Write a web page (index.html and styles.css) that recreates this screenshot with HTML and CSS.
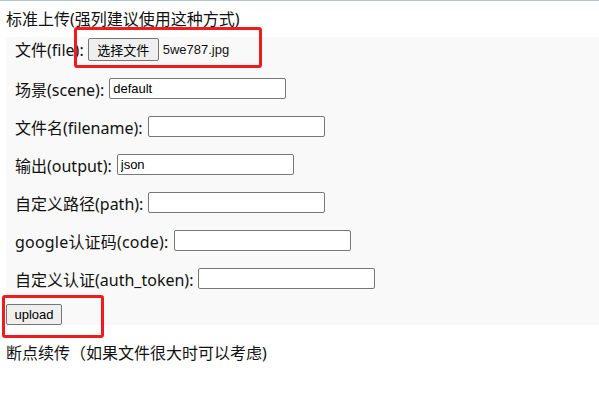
FILE: index.html
```html
<!DOCTYPE html>
<html lang="zh-CN">
<head>
<meta charset="utf-8">
<title>upload</title>
<link rel="stylesheet" href="styles.css">
</head>
<body>
<div class="page">
  <div class="title">标准上传(强列建议使用这种方式)</div>
  <form class="panel">
    <div class="row row-file">
      <span class="label">文件(file):</span>
      <button type="button" class="btn btn-file">选择文件</button>
      <span class="filename">5we787.jpg</span>
    </div>
    <div class="row">
      <span class="label">场景(scene):</span>
      <input class="field" type="text" value="default">
    </div>
    <div class="row">
      <span class="label">文件名(filename):</span>
      <input class="field" type="text">
    </div>
    <div class="row">
      <span class="label">输出(output):</span>
      <input class="field" type="text" value="json">
    </div>
    <div class="row">
      <span class="label">自定义路径(path):</span>
      <input class="field" type="text">
    </div>
    <div class="row">
      <span class="label label-wide">google认证码(code):</span>
      <input class="field" type="text">
    </div>
    <div class="row">
      <span class="label">自定义认证(auth_token):</span>
      <input class="field" type="text">
    </div>
    <div class="submit-row">
      <button type="button" class="btn btn-upload">upload</button>
    </div>
  </form>
  <div class="subtitle">断点续传（如果文件很大时可以考虑)</div>
  <div class="mark mark-file"></div>
  <div class="mark mark-upload"></div>
</div>
</body>
</html>
```

FILE: styles.css
```css
html, body {
  margin: 0;
  padding: 0;
  background: #ffffff;
}

body {
  border-top: 1px solid #b3c9c9;
  font-family: "Noto Sans", "Noto Sans CJK SC", sans-serif;
  font-size: 16px;
  color: #111;
  overflow: hidden;
}

.page {
  position: relative;
  padding-left: 6px;
}

.title {
  height: 36px;
  line-height: 36px;
}

.panel {
  background: #f9f9f9;
  margin: 0;
  display: flex;
  flex-direction: column;
}

.row {
  display: flex;
  align-items: center;
  height: 21px;
  padding-left: 9px;
  margin-bottom: 17px;
}

.row-file {
  height: 24px;
}

.label {
  margin-right: 5px;
  white-space: nowrap;
}

.label-wide {
  letter-spacing: 0.2px;
}

.field {
  box-sizing: border-box;
  width: 177px;
  height: 21px;
  border: 1px solid #767676;
  border-radius: 2px;
  padding: 1px 3px;
  font-family: "Liberation Sans", Arial, sans-serif;
  font-size: 13px;
  color: #000;
  background: #fff;
  outline: none;
}

.btn {
  box-sizing: border-box;
  border: 1px solid #767676;
  border-radius: 2px;
  background: #efefef;
  color: #000;
  font-family: "Liberation Sans", "Noto Sans CJK SC", sans-serif;
  font-size: 13px;
  padding: 0 6px;
  margin: 0;
}

.btn-file {
  height: 23px;
  width: 71px;
  margin-left: -1px;
}

.filename {
  margin-left: 4px;
  font-family: "Liberation Sans", Arial, sans-serif;
  font-size: 13px;
}

.submit-row {
  display: flex;
  margin-top: -2px;
}

.btn-upload {
  height: 21px;
  width: 56px;
}

.subtitle {
  margin-top: 16px;
  line-height: 24px;
}

.mark {
  position: absolute;
  border: 3px solid #f01c1c;
  border-radius: 3px;
  box-sizing: border-box;
}

.mark-file {
  left: 74px;
  top: 26px;
  width: 188px;
  height: 41px;
}

.mark-upload {
  left: 2px;
  top: 294px;
  width: 102px;
  height: 43px;
}
```
